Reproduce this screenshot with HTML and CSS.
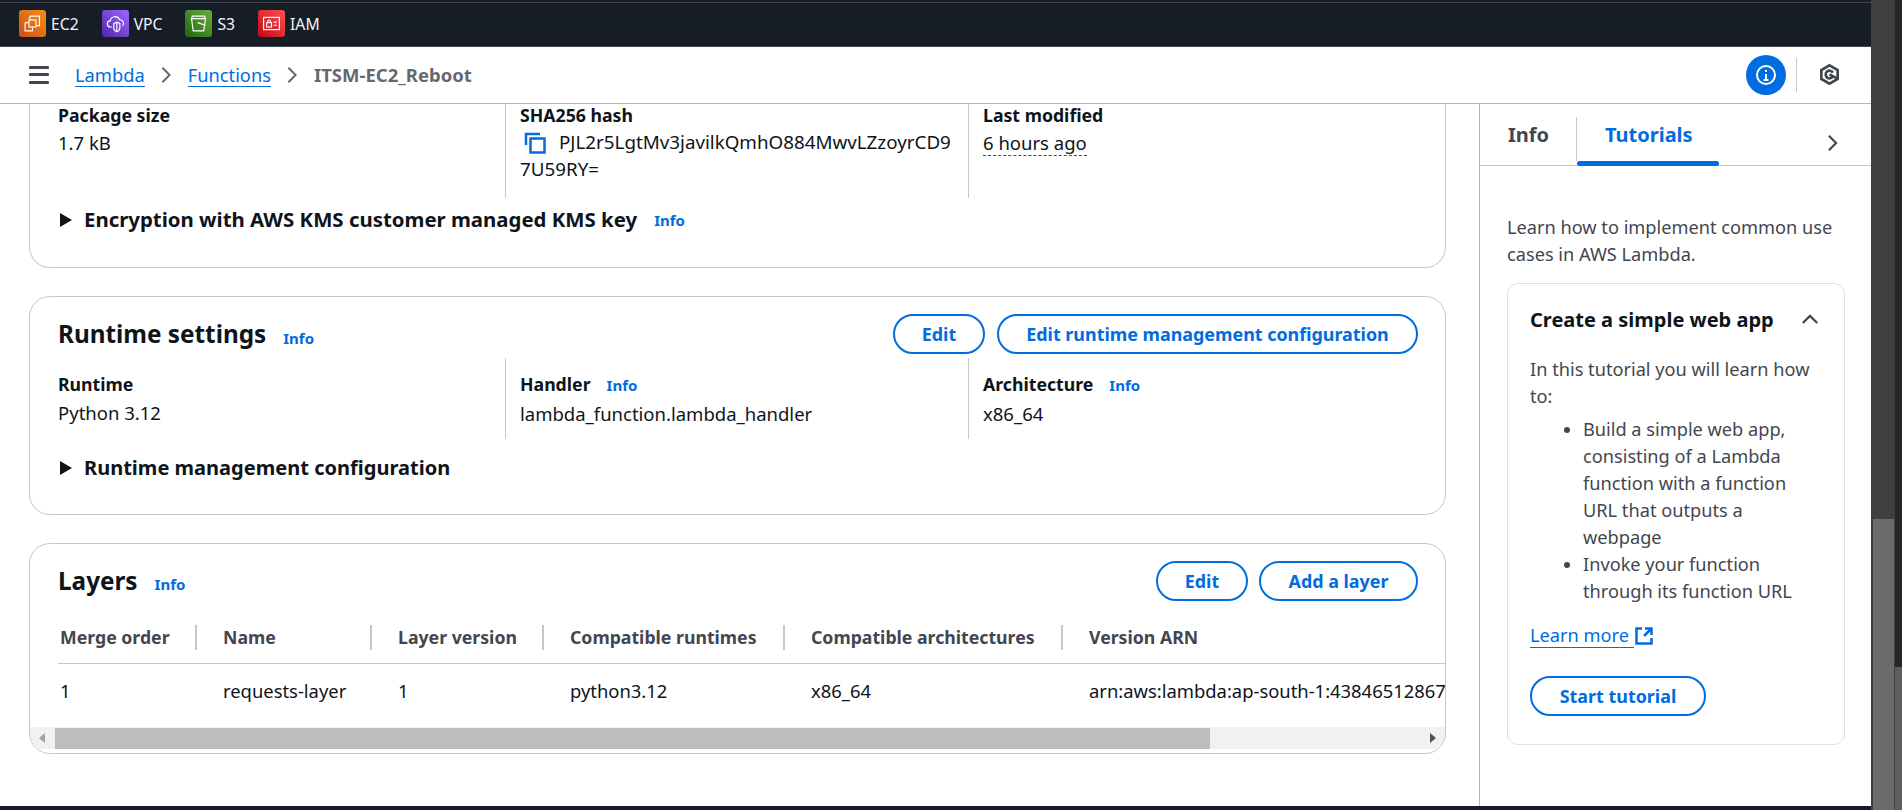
FILE: index.html
```html
<!DOCTYPE html>
<html lang="en">
<head>
<meta charset="utf-8">
<title>ITSM-EC2_Reboot - Lambda</title>
<link rel="stylesheet" href="styles.css">
</head>
<body>
<div class="window">
  <div class="console">
    <nav class="topbar">
      <a class="fav"><span class="fav-icon ec2"><svg viewBox="0 0 24 24"><path d="M9 3.500h11v11h-4M9 3.500v4M3.500 11h4M3.500 11v9.500h8.500v-4"/><rect x="8" y="8" width="8" height="8"/></svg></span>EC2</a>
      <a class="fav"><span class="fav-icon vpc"><svg viewBox="0 0 24 24"><path d="M8 16H6.500a3.500 3.500 0 0 1-.5-7 5.500 5.500 0 0 1 10.500-1.500A4.500 4.500 0 0 1 20 15"/><path d="M10 12l3.500-1.500L17 12v5c0 2.500-1.500 3.500-3.500 4.500C11.500 20.500 10 19.500 10 17z"/><path d="M13.500 11v10"/></svg></span>VPC</a>
      <a class="fav"><span class="fav-icon s3"><svg viewBox="0 0 24 24"><path d="M4 6.500h16l-2 14H6z"/><path d="M4 6.500l1-3h14l1 3"/><path d="M11 11l9 3"/></svg></span>S3</a>
      <a class="fav"><span class="fav-icon iam"><svg viewBox="0 0 24 24"><rect x="3" y="5" width="18" height="14"/><rect x="6.500" y="11" width="5.500" height="5"/><path d="M7.800 11V9.500a1.500 1.500 0 0 1 3 0V11M14.500 10.500H18M14.500 14H18"/></svg></span>IAM</a>
    </nav>
    <header class="crumbs">
      <button class="menu" aria-label="Menu"><span></span><span></span><span></span></button>
      <a class="crumb">Lambda</a>
      <svg class="sep" viewBox="0 0 12 20"><path d="M2 2l8 8-8 8"/></svg>
      <a class="crumb">Functions</a>
      <svg class="sep" viewBox="0 0 12 20"><path d="M2 2l8 8-8 8"/></svg>
      <span class="crumb-current">ITSM-EC2_Reboot</span>
      <span class="crumbs-right">
        <span class="info-circle"><svg viewBox="0 0 24 24"><circle cx="12" cy="12" r="9"/><path d="M12 11v6M9.500 17h5M12 7v2"/></svg></span>
        <span class="vr"></span>
        <svg class="hex" viewBox="0 0 24 24"><path d="M12 2.500l8.500 4.800v9.400L12 21.500l-8.500-4.800V7.300z"/><path d="M15.500 10a4 4 0 1 0 0 4"/><path d="M12 12l8 4"/></svg>
      </span>
    </header>
    <div class="body">
      <main class="content">
        <section class="card card-cut">
          <div class="cols cols-tall">
            <div class="col">
              <div class="label">Package size</div>
              <div class="value">1.7 kB</div>
            </div>
            <div class="col">
              <div class="label">SHA256 hash</div>
              <div class="value value-hash"><svg class="copy" viewBox="0 0 24 24"><path d="M3 14V3h14"/><rect x="7.500" y="7.500" width="14" height="14"/></svg>PJL2r5LgtMv3javilkQmhO884MwvLZzoyrCD97U59RY=</div>
            </div>
            <div class="col">
              <div class="label">Last modified</div>
              <div class="value"><span class="dotted">6 hours ago</span></div>
            </div>
          </div>
          <div class="expander"><span class="caret"></span>Encryption with AWS KMS customer managed KMS key<a class="info info-exp">Info</a></div>
        </section>

        <section class="card">
          <div class="card-head">
            <h2>Runtime settings</h2><a class="info info-head">Info</a>
            <div class="actions"><a class="btn btn-edit">Edit</a><a class="btn btn-long">Edit runtime management configuration</a></div>
          </div>
          <div class="cols">
            <div class="col">
              <div class="label">Runtime</div>
              <div class="value">Python 3.12</div>
            </div>
            <div class="col">
              <div class="label">Handler<a class="info info-label">Info</a></div>
              <div class="value">lambda_function.lambda_handler</div>
            </div>
            <div class="col">
              <div class="label">Architecture<a class="info info-label">Info</a></div>
              <div class="value">x86_64</div>
            </div>
          </div>
          <div class="expander expander-2"><span class="caret"></span>Runtime management configuration</div>
        </section>

        <section class="card card-layers">
          <div class="card-head card-head-layers">
            <h2>Layers</h2><a class="info info-head">Info</a>
            <div class="actions"><a class="btn btn-edit">Edit</a><a class="btn btn-add">Add a layer</a></div>
          </div>
          <div class="table-clip">
            <div class="trow thead">
              <span class="c c1">Merge order</span>
              <span class="c c2">Name</span>
              <span class="c c3">Layer version</span>
              <span class="c c4">Compatible runtimes</span>
              <span class="c c5">Compatible architectures</span>
              <span class="c c6">Version ARN</span>
            </div>
            <div class="trow tbody">
              <span class="c c1">1</span>
              <span class="c c2">requests-layer</span>
              <span class="c c3">1</span>
              <span class="c c4">python3.12</span>
              <span class="c c5">x86_64</span>
              <span class="c c6">arn:aws:lambda:ap-south-1:43846512867</span>
            </div>
          </div>
          <div class="hscroll">
            <span class="arrow arrow-l"></span>
            <span class="thumb"></span>
            <span class="arrow arrow-r"></span>
          </div>
        </section>
      </main>

      <aside class="panel">
        <div class="tabs">
          <span class="tab">Info</span>
          <span class="tab tab-active">Tutorials</span>
          <svg class="tab-next" viewBox="0 0 12 20"><path d="M2 2l8 8-8 8"/></svg>
        </div>
        <div class="panel-body">
          <p class="lead">Learn how to implement common use cases in AWS Lambda.</p>
          <div class="tutorial">
            <div class="tutorial-head"><h3>Create a simple web app</h3><svg class="up" viewBox="0 0 20 12"><path d="M2 10l8-8 8 8"/></svg></div>
            <p class="tutorial-text">In this tutorial you will learn how to:</p>
            <ul>
              <li>Build a simple web app, consisting of a Lambda function with a function URL that outputs a webpage</li>
              <li>Invoke your function through its function URL</li>
            </ul>
            <a class="learn"><span class="learn-text">Learn more</span><svg class="ext" viewBox="0 0 20 20"><path d="M8 2.500H2.500v15h15V12M11 2.500h6.500V9M17 3l-7 7"/></svg></a>
            <a class="btn btn-start">Start tutorial</a>
          </div>
        </div>
      </aside>
    </div>
    <div class="footerbar"></div>
  </div>
  <div class="vscroll"><span class="vthumb"></span></div>
</div>
</body>
</html>
```
FILE: styles.css
```css
* { box-sizing: border-box; }
html, body { margin: 0; height: 100%; overflow: hidden; }
body { font-family: "Noto Sans", "Liberation Sans", sans-serif; font-size: 18.200px; color: #0f141a; background: #fff; }
a { cursor: pointer; }
h2, h3, p, ul { margin: 0; }

.window { display: flex; width: 1902px; height: 810px; }
.console { width: 1871px; height: 810px; display: flex; flex-direction: column; }

.topbar { height: 47px; flex: none; background: #161d26; box-shadow: inset 0 2px 0 #161d26, inset 0 3px 0 #424650; border-bottom: 1px solid #424650; display: flex; align-items: center; padding: 0 0 0 19px; gap: 23px; color: #f3f3f7; font-size: 15.700px; }
.fav { display: flex; align-items: center; gap: 5px; padding-top: 1px; }
.fav-icon { width: 27px; height: 27px; border-radius: 3px; display: flex; align-items: center; justify-content: center; }
.fav-icon svg { width: 21px; height: 21px; fill: none; stroke: #fff; stroke-width: 1.300; }
.ec2 { background: linear-gradient(45deg, #c8511b, #f59015); }
.vpc { background: linear-gradient(45deg, #4d27a8, #a166ff); }
.s3 { background: linear-gradient(45deg, #1b660f, #6cae3e); }
.iam { background: linear-gradient(45deg, #bd0816, #ff5252); }

.crumbs { height: 57px; flex: none; background: #fff; border-bottom: 1px solid #b4b4bb; display: flex; align-items: center; padding: 0 30px 1px 29px; font-size: 18.300px; }
.menu { width: 20px; height: 18px; padding: 0; border: 0; background: none; display: flex; flex-direction: column; justify-content: space-between; margin-right: 26px; }
.menu span { display: block; height: 3px; background: #424650; border-radius: 1px; }
.crumb { color: #006ce0; border-bottom: 1px solid #006ce0; line-height: 23px; }
.sep { width: 12px; height: 18px; margin: 0 16px 0 15px; fill: none; stroke: #656871; stroke-width: 2.200; }
.crumb-current { color: #656871; font-weight: 700; font-size: 18.500px; }
.crumbs-right { margin-left: auto; display: flex; align-items: center; }
.info-circle { width: 40px; height: 40px; border-radius: 50%; background: #006ce0; display: flex; align-items: center; justify-content: center; }
.info-circle svg { width: 24px; height: 24px; fill: none; stroke: #fff; stroke-width: 2; }
.vr { width: 1px; height: 34px; background: #c6c6cd; margin: 0 21px 0 10px; }
.hex { width: 23px; height: 23px; fill: none; stroke: #424650; stroke-width: 2.800; }

.body { flex: 1; min-height: 0; display: flex; overflow: hidden; }
.content { width: 1479px; flex: none; padding-left: 29px; padding-right: 33px; overflow: hidden; }
.panel { width: 392px; flex: none; border-left: 1px solid #b4b4bb; background: #fff; }

.card { border: 1px solid #c6c6cd; border-radius: 21px; background: #fff; margin-bottom: 28px; padding: 0 27px 0 28px; height: 219px; }
.card-cut { border-top: 0; border-top-left-radius: 0; border-top-right-radius: 0; height: 164px; }
.card-layers { height: 211px; padding: 0; overflow: hidden; margin-bottom: 0; }

.cols { display: grid; grid-template-columns: 447px 463px 1fr; }
.cols-tall { height: 94px; }
.col { padding: 13px 0 0 14px; border-left: 1px solid #c6c6cd; height: 81px; }
.col:first-child { border-left: 0; padding-left: 0; }
.cols-tall .col { height: 94px; padding-top: 0; }
.label { font-weight: 700; line-height: 27px; font-size: 17.700px; white-space: nowrap; margin-bottom: 1px; }
.value { line-height: 27px; font-size: 18.500px; }
.value-hash { font-size: 18.800px; word-break: break-all; padding-right: 15px; }
.cols-tall .label { line-height: 22px; margin-bottom: 3px; }
.copy { width: 24px; height: 24px; fill: none; stroke: #006ce0; stroke-width: 2.500; vertical-align: -6px; margin: 0 12px 0 3px; }
.dotted { border-bottom: 1px dashed #424650; }

.expander { display: flex; align-items: center; font-weight: 700; font-size: 20.400px; line-height: 27px; margin-top: 7px; }
.expander-2 { margin-top: 15px; font-size: 20.050px; }
.caret { width: 0; height: 0; border-left: 12px solid #0f141a; border-top: 7px solid transparent; border-bottom: 7px solid transparent; margin: 0 12px 0 2px; }

.info { color: #006ce0; font-weight: 700; font-size: 15px; }
.info-exp { margin-left: 17px; padding-top: 2px; }
.info-head { margin-left: 17px; padding-top: 8px; }
.info-label { margin-left: 16px; }

.card-head { display: flex; align-items: center; height: 61px; padding-top: 12px; }
.card-head h2 { font-size: 24.300px; line-height: 32px; font-weight: 700; }
.actions { margin-left: auto; display: flex; gap: 12px; }
.btn { display: flex; align-items: center; justify-content: center; height: 40px; border: 2px solid #006ce0; border-radius: 20px; color: #006ce0; font-weight: 700; font-size: 17.900px; white-space: nowrap; }
.btn-edit { width: 92px; }
.btn-long { width: 421px; }
.btn-add { width: 159px; }
.btn-start { width: 176px; }

.card-head-layers { margin: 0 27px 0 28px; height: 67px; padding-top: 7px; }
.card-head-layers .actions { gap: 11px; }
.card-head-layers .info-head { padding-top: 6px; }
.table-clip { overflow: hidden; margin-left: 28px; height: 117px; }
.trow { display: flex; white-space: nowrap; font-size: 18.400px; }
.thead { height: 53px; align-items: center; font-weight: 700; font-size: 17.700px; color: #424650; border-bottom: 1px solid #c6c6cd; width: 1500px; }
.tbody { height: 64px; align-items: center; padding-bottom: 12px; }
.c { flex: none; padding-left: 26px; line-height: 27px; }
.c1 { width: 135px; padding-left: 0; margin-left: 2px; }
.c2 { width: 175px; }
.c3 { width: 172px; }
.c4 { width: 241px; }
.c5 { width: 278px; }
.tbody .c2, .tbody .c3, .tbody .c4, .tbody .c5, .tbody .c6 { padding-left: 28px; }
.thead .c2, .thead .c3, .thead .c4, .thead .c5, .thead .c6 { border-left: 2px solid #c6c6cd; line-height: 25px; }

.hscroll { height: 22px; background: #f1f1f1; display: flex; align-items: center; position: relative; margin-top: -1px; }
.thumb { position: absolute; left: 25px; width: 1155px; top: 1px; height: 21px; background: #bdbdbd; }
.arrow { position: absolute; width: 0; height: 0; border-top: 5px solid transparent; border-bottom: 5px solid transparent; }
.arrow-l { left: 9px; border-right: 6px solid #a3a3a3; }
.arrow-r { right: 9px; border-left: 6px solid #505050; }

.tabs { height: 62px; border-bottom: 1px solid #c6c6cd; position: relative; display: flex; font-weight: 700; font-size: 20px; color: #424650; }
.tab { line-height: 30px; position: relative; }
.tab:first-child { width: 97px; border-right: 1px solid #c6c6cd; height: 44px; margin-top: 13px; padding: 3px 0 0 28px; }
.tab-active { color: #006ce0; width: 142px; padding: 16px 0 0 28px; }
.tab-active::after { content: ""; position: absolute; left: 0; right: 0; bottom: -1px; height: 5px; background: #006ce0; border-radius: 3px; }
.tab-next { position: absolute; right: 32px; top: 30px; width: 13px; height: 18px; fill: none; stroke: #424650; stroke-width: 2.400; }

.panel-body { padding: 48px 26px 0 27px; color: #424650; font-size: 18.200px; line-height: 27px; }
.lead { margin-bottom: 15px; }
.tutorial { border: 1px solid #dedee3; border-radius: 11px; height: 462px; padding: 18px 22px 0; }
.tutorial-head { display: flex; align-items: center; justify-content: space-between; height: 34px; margin-bottom: 20px; }
.tutorial-head h3 { font-size: 20px; font-weight: 700; color: #0f141a; line-height: 27px; }
.up { width: 18px; height: 11px; fill: none; stroke: #424650; stroke-width: 2.400; margin-right: 3px; }
.tutorial ul { padding-left: 53px; margin-top: 6px; }
.learn { display: inline-flex; align-items: center; color: #006ce0; margin-top: 18px; }
.learn-text { border-bottom: 1px solid #006ce0; line-height: 24px; padding-right: 5px; }
.ext { width: 20px; height: 20px; fill: none; stroke: #006ce0; stroke-width: 2.500; }
.btn-start { margin-top: 27px; }

.footerbar { height: 4px; flex: none; background: #161d26; }

.vscroll { width: 31px; flex: none; background: #3f3f3f; position: relative; }
.vscroll::before { content: ""; position: absolute; right: 0; top: 667px; bottom: 0; width: 7px; background: #5f5f5f; z-index: 1; }
.vscroll::after { content: ""; position: absolute; right: 0; top: 0; height: 667px; width: 7px; background: #272727; }
.vthumb { position: absolute; left: 2px; width: 21px; top: 519px; bottom: 0; background: #6b6b6b; }
```
